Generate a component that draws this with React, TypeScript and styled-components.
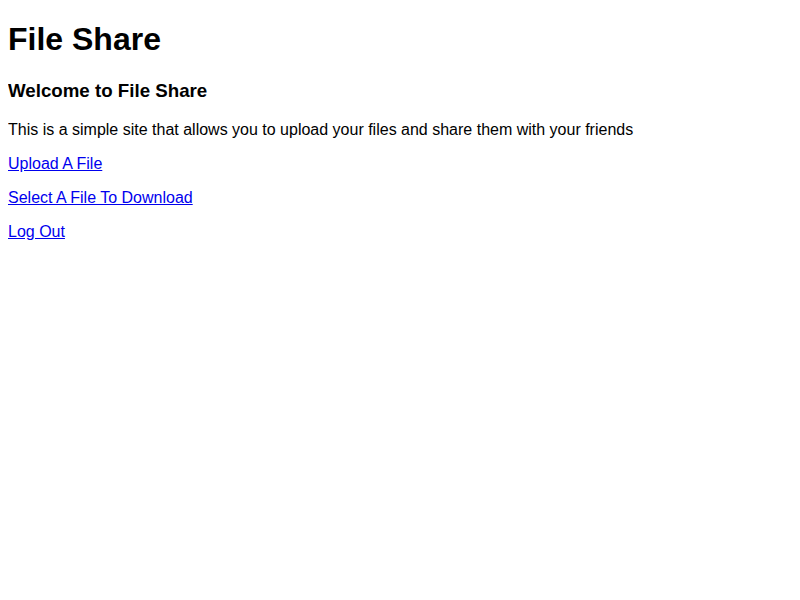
import React from "react";
import styled, { createGlobalStyle } from "styled-components";

const GlobalStyle = createGlobalStyle`
  body {
    margin: 0 8px;
    font-family: "Liberation Sans", Arial, sans-serif;
    background: #ffffff;
    color: #000000;
  }
`;

const Title = styled.h1`
  font-size: 32px;
  font-weight: bold;
  margin: 21.44px 0;
`;

const Subtitle = styled.h3`
  font-size: 18.72px;
  font-weight: bold;
  margin: 18.72px 0;
`;

const Text = styled.p`
  font-size: 16px;
  margin: 16px 0;
`;

const NavLink = styled.a`
  color: #0000ee;
  text-decoration: underline;
`;

export default function App() {
  return (
    <>
      <GlobalStyle />
      <Title>File Share</Title>
      <Subtitle>Welcome to File Share</Subtitle>
      <Text>This is a simple site that allows you to upload your files and share them with your friends</Text>
      <Text>
        <NavLink href="#">Upload A File</NavLink>
      </Text>
      <Text>
        <NavLink href="#">Select A File To Download</NavLink>
      </Text>
      <Text>
        <NavLink href="#">Log Out</NavLink>
      </Text>
    </>
  );
}
